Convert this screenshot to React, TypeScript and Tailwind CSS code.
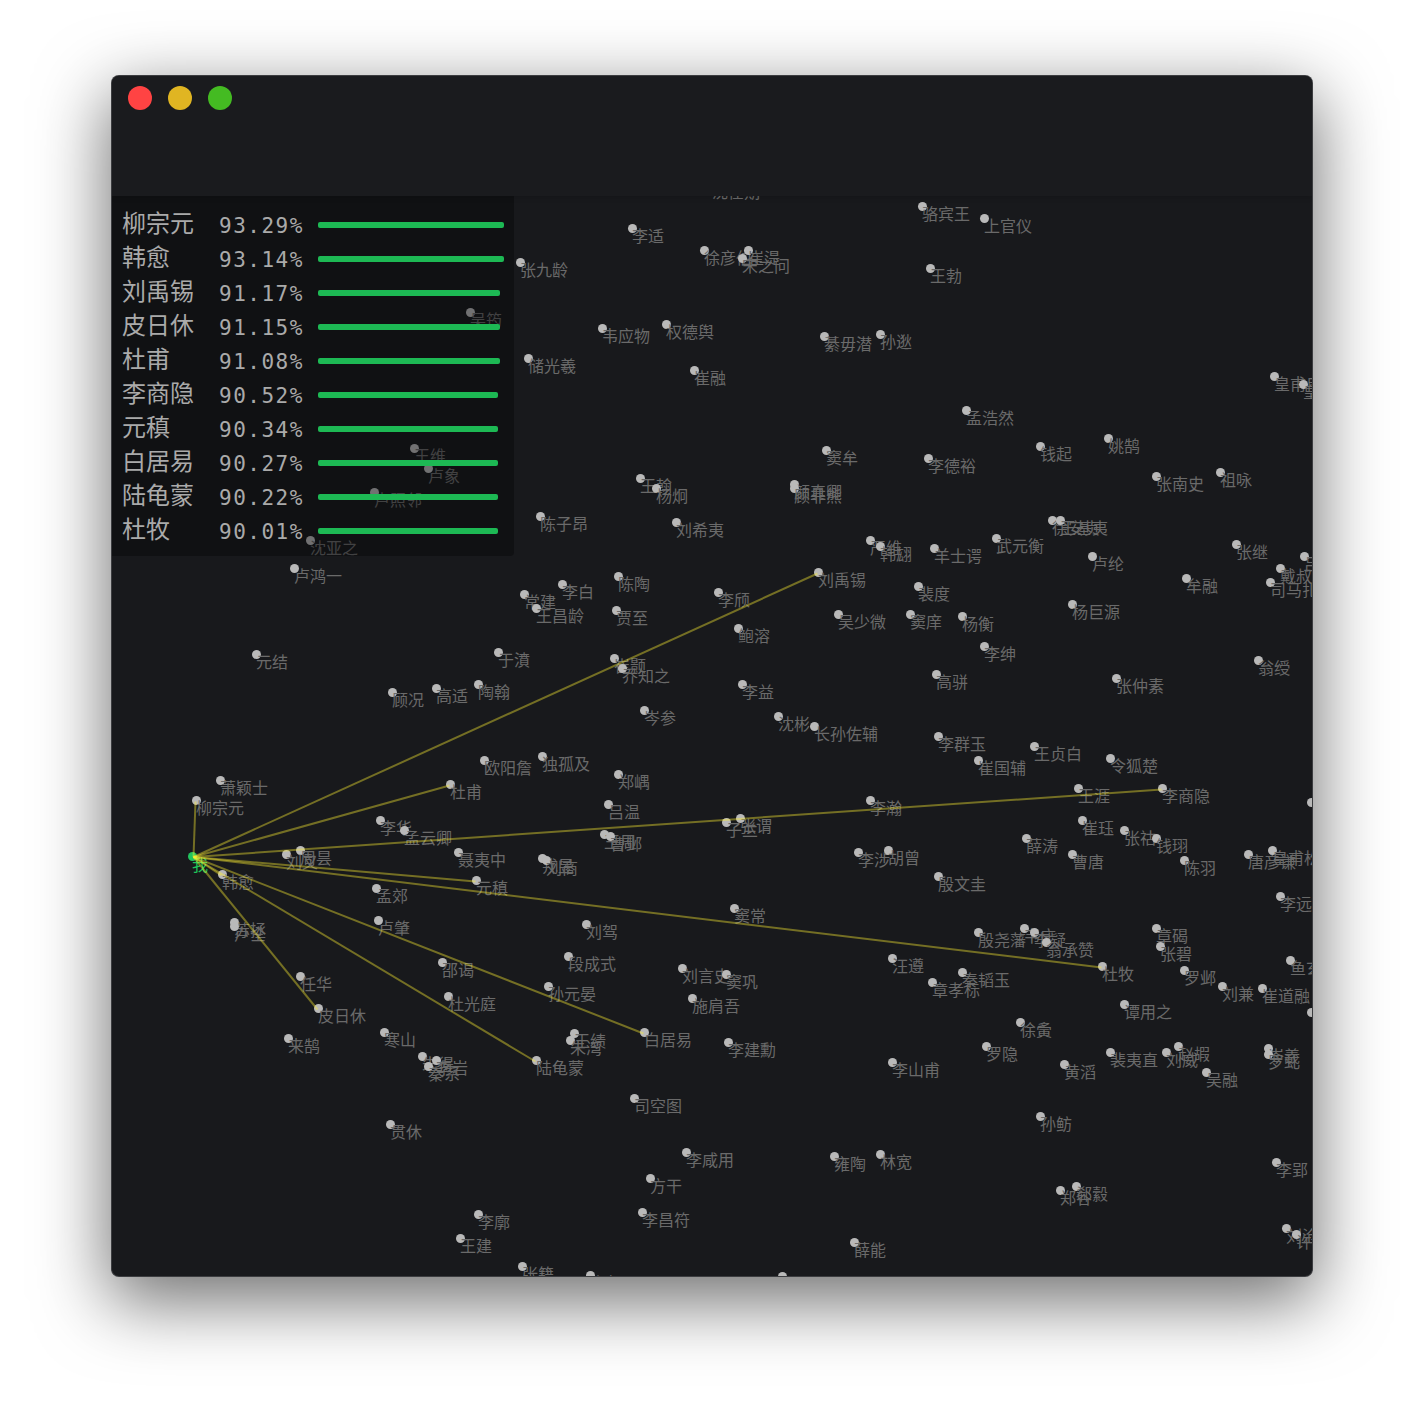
import React from "react";

const OX = 112;
const OY = 196;

const scores: [string, string, number][] = [
  ["柳宗元", "93.29%", 186],
  ["韩愈", "93.14%", 186],
  ["刘禹锡", "91.17%", 182],
  ["皮日休", "91.15%", 182],
  ["杜甫", "91.08%", 182],
  ["李商隐", "90.52%", 180],
  ["元稹", "90.34%", 180],
  ["白居易", "90.27%", 180],
  ["陆龟蒙", "90.22%", 180],
  ["杜牧", "90.01%", 180],
];

const nodes: [string, number, number][] = [
  ["沈佺期", 712, 184], ["骆宾王", 922, 206], ["上官仪", 984, 218], ["李适", 632, 228], ["徐彦伯", 704, 250], ["崔湜", 748, 250],
  ["宋之问", 742, 258], ["张九龄", 520, 262], ["王勃", 930, 268], ["吴筠", 470, 312], ["韦应物", 602, 328], ["权德舆", 666, 324],
  ["綦毋潜", 824, 336], ["孙逖", 880, 334], ["储光羲", 528, 358], ["崔融", 694, 370], ["皇甫冉", 1274, 376], ["皇甫曾", 1303, 384],
  ["孟浩然", 966, 410], ["姚鹄", 1108, 438], ["钱起", 1040, 446], ["窦牟", 826, 450], ["李德裕", 928, 458], ["张南史", 1156, 476],
  ["祖咏", 1220, 472], ["王翰", 640, 478], ["杨炯", 656, 488], ["颜真卿", 794, 484], ["顾非熊", 794, 488], ["陈子昂", 540, 516],
  ["刘希夷", 676, 522], ["严维", 870, 540], ["韩翃", 880, 546], ["羊士谔", 934, 548], ["武元衡", 996, 538], ["徐安贞", 1052, 520],
  ["王基夷", 1060, 520], ["卢纶", 1092, 556], ["张继", 1236, 544], ["司马扎", 1270, 582], ["戴叔伦", 1280, 568], ["吕岩", 1304, 556],
  ["牟融", 1186, 578], ["裴度", 918, 586], ["窦庠", 910, 614], ["杨衡", 962, 616], ["杨巨源", 1072, 604], ["吴少微", 838, 614],
  ["李绅", 984, 646], ["高骈", 936, 674], ["张仲素", 1116, 678], ["翁绶", 1258, 660], ["李群玉", 938, 736], ["王贞白", 1034, 746],
  ["崔国辅", 978, 760], ["令狐楚", 1110, 758], ["王涯", 1078, 788], ["李商隐", 1162, 788], ["张说", 1311, 802],
  ["陈陶", 618, 576], ["李白", 562, 584], ["常建", 524, 594], ["王昌龄", 536, 608], ["贾至", 616, 610], ["李颀", 718, 592],
  ["刘禹锡", 818, 572], ["鲍溶", 738, 628], ["于濆", 498, 652], ["崔颢", 614, 658], ["乔知之", 622, 668], ["陶翰", 478, 684],
  ["李益", 742, 684], ["岑参", 644, 710], ["沈彬", 778, 716], ["长孙佐辅", 814, 726], ["欧阳詹", 484, 760], ["独孤及", 542, 756],
  ["郑嵎", 618, 774], ["吕温", 608, 804], ["李瀚", 870, 800], ["元结", 256, 654], ["卢鸿一", 294, 568], ["沈亚之", 310, 540],
  ["卢照邻", 374, 492], ["王维", 414, 448], ["卢象", 428, 468], ["顾况", 392, 692], ["高适", 436, 688],
  ["萧颖士", 220, 780], ["柳宗元", 196, 800], ["杜甫", 450, 784], ["李华", 380, 820], ["孟云卿", 404, 830], ["聂夷中", 458, 852],
  ["周昙", 300, 850], ["刘叉", 286, 854], ["韩愈", 222, 874], ["孟郊", 376, 888], ["卢肇", 378, 920], ["苏拯", 234, 922],
  ["卢仝", 234, 926], ["任华", 300, 976], ["皮日休", 318, 1008], ["来鹄", 288, 1038], ["寒山", 384, 1032],
  ["王周", 604, 834], ["曹邺", 610, 836], ["戎昱", 542, 858], ["刘商", 546, 860], ["元稹", 476, 880], ["刘驾", 586, 924],
  ["窦常", 734, 908], ["段成式", 568, 956], ["邵谒", 442, 962], ["孙元晏", 548, 986], ["杜光庭", 448, 996], ["刘言史", 682, 968],
  ["窦巩", 726, 974], ["施肩吾", 692, 998], ["王绩", 574, 1033], ["朱湾", 570, 1040], ["白居易", 644, 1032], ["李建勳", 728, 1042],
  ["陆龟蒙", 536, 1060], ["司空图", 634, 1098], ["李涉", 858, 852], ["胡曾", 888, 850], ["子兰", 726, 822], ["张谓", 740, 818],
  ["汪遵", 892, 958], ["李山甫", 892, 1062],
  ["崔珏", 1082, 820], ["张祜", 1124, 830], ["钱珝", 1156, 838], ["薛涛", 1026, 838], ["曹唐", 1072, 854], ["陈羽", 1184, 860],
  ["唐彦谦", 1248, 854], ["皇甫松", 1272, 850], ["殷文圭", 938, 876], ["李远", 1280, 896], ["章碣", 1156, 928], ["张碧", 1160, 946],
  ["殷尧藩", 978, 932], ["韦庄", 1024, 928], ["李疑", 1034, 932], ["翁承赞", 1046, 942], ["杜牧", 1102, 966], ["秦韬玉", 962, 972],
  ["章孝标", 932, 982], ["罗邺", 1184, 970], ["刘兼", 1222, 986], ["崔道融", 1262, 988], ["鱼玄机", 1290, 960], ["张蠙", 1311, 1012],
  ["谭用之", 1124, 1004], ["徐夤", 1020, 1022], ["罗隐", 986, 1046], ["黄滔", 1064, 1064], ["裴夷直", 1110, 1052], ["赵嘏", 1178, 1046],
  ["刘威", 1166, 1052], ["吴融", 1206, 1072], ["岑羲", 1268, 1048], ["罗虬", 1268, 1054], ["孙鲂", 1040, 1116],
  ["李郢", 1276, 1162], ["郑谷", 1060, 1190], ["郗縠", 1076, 1186], ["刘沧", 1286, 1228], ["许棠", 1296, 1234],
  ["朱得", 422, 1056], ["李岩", 436, 1060], ["秦系", 428, 1066], ["贯休", 390, 1124], ["方干", 650, 1178], ["李昌符", 642, 1212],
  ["李廓", 478, 1214], ["王建", 460, 1238], ["张籍", 522, 1266], ["李频", 590, 1275], ["周贺", 782, 1276],
  ["李咸用", 686, 1152], ["雍陶", 834, 1156], ["林宽", 880, 1154], ["薛能", 854, 1242],
];

const edges = ["柳宗元", "韩愈", "刘禹锡", "皮日休", "杜甫", "李商隐", "元稹", "白居易", "陆龟蒙", "杜牧"];

export default function App() {
  const nodePos = (name: string) => nodes.find((n) => n[0] === name)!;
  return (
    <div className="w-[1424px] h-[1424px] bg-white pl-[112px] pt-[76px] overflow-hidden">
      <div
        className="w-[1200px] h-[1200px] flex flex-col rounded-[7px] overflow-hidden bg-[#18191c] shadow-[0_0_0_1px_#3c3d40,0_22px_70px_4px_rgba(0,0,0,0.56)]"
        style={{ fontFamily: '"Noto Sans CJK SC", sans-serif' }}
      >
        <div className="relative z-10 h-[120px] shrink-0 bg-[#1a1b1e] flex items-start gap-4 pl-4 pt-2.5 shadow-[0_2px_5px_rgba(0,0,0,0.12)]">
          <div className="w-6 h-6 rounded-full bg-[#ff4343]" />
          <div className="w-6 h-6 rounded-full bg-[#e0b522]" />
          <div className="w-6 h-6 rounded-full bg-[#44bb22]" />
        </div>
        <div className="relative flex-1 overflow-hidden">
          {nodes.map(([name, x, y], i) => (
            <React.Fragment key={i}>
              <div
                className="absolute w-[9px] h-[9px] rounded-full bg-[#b9b9b9]"
                style={{ left: x - OX - 4.5, top: y - OY - 4.5 }}
              />
              <span
                className="absolute whitespace-nowrap text-[16px] leading-4 text-[#6a6a6a]"
                style={{ left: x - OX, top: y - OY - 1 }}
              >
                {name}
              </span>
            </React.Fragment>
          ))}
          <div
            className="absolute w-[9px] h-[9px] rounded-full bg-[#22c55e]"
            style={{ left: 192 - OX - 4.5, top: 856 - OY - 4.5 }}
          />
          <span
            className="absolute whitespace-nowrap text-[16px] leading-4 text-[#1ec45a]"
            style={{ left: 192 - OX, top: 856 - OY }}
          >
            我
          </span>
          <svg className="absolute left-0 top-0 w-full h-full" width="1200" height="1004">
            {edges.map((name) => {
              const n = nodePos(name);
              return (
                <line
                  key={name}
                  x1={193.5 - OX}
                  y1={857 - OY}
                  x2={n[1] - 0.5 - OX}
                  y2={n[2] + 1.5 - OY}
                  stroke="#fff033"
                  strokeOpacity={0.4}
                  strokeWidth={2}
                />
              );
            })}
          </svg>
          <div className="absolute left-0 top-0 w-[402px] h-[360px] pl-[10px] pt-3 bg-[#060608]/40 rounded-br-[4px] flex flex-col">
            {scores.map(([name, pct, w]) => (
              <div key={name} className="h-[34px] flex items-center">
                <div className="w-[97px] pb-[6px] text-[24px] leading-[34px] text-[#aaaaaa] whitespace-nowrap">{name}</div>
                <div
                  className="w-[99px] pt-[2px] text-[21px] leading-[34px] tracking-[1.5px] text-[#aaaaaa] whitespace-nowrap"
                  style={{ fontFamily: '"DejaVu Sans Mono", monospace' }}
                >
                  {pct}
                </div>
                <div className="h-1.5 rounded-[2px] bg-[#1db954]" style={{ width: w }} />
              </div>
            ))}
          </div>
        </div>
      </div>
    </div>
  );
}
